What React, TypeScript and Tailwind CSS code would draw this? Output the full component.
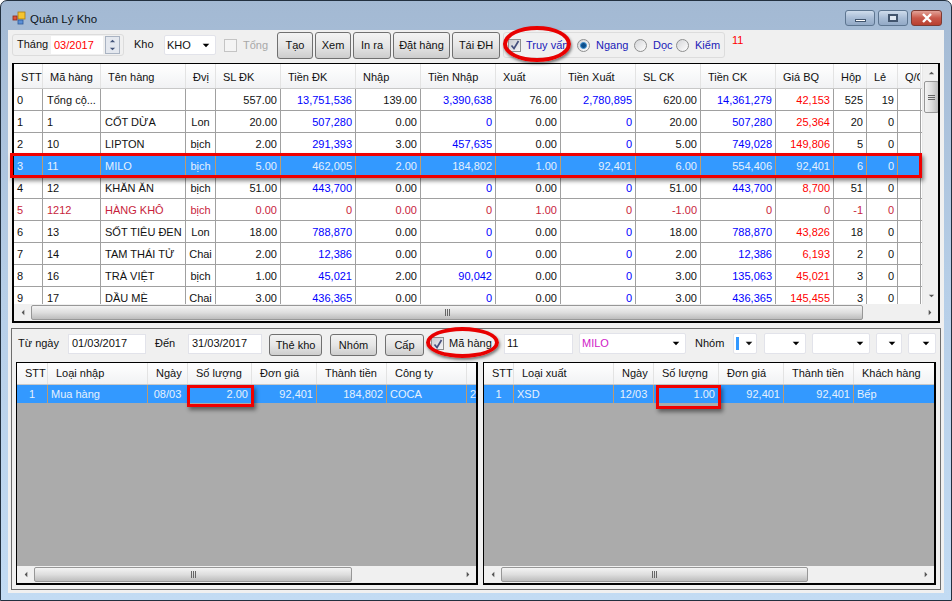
import React from 'react';

const topCols = 'grid grid-cols-[29px_58px_85px_30px_65px_75px_65px_75px_65px_75px_65px_75px_58px_33px_31px_23px]';
const leftCols = 'grid grid-cols-[31px_100px_40px_64px_65px_70px_80px_10px]';
const rightCols = 'grid grid-cols-[30px_100px_40px_65px_65px_70px_81px]';

const topHead = ['STT', 'Mã hàng', 'Tên hàng', 'Đvị', 'SL ĐK', 'Tiền ĐK', 'Nhập', 'Tiền Nhập', 'Xuất', 'Tiền Xuất', 'SL CK', 'Tiền CK', 'Giá BQ', 'Hộp', 'Lẻ', 'Q/C'];

const rows = [
  ['0', 'Tổng cộ...', '', '', '557.00', '13,751,536', '139.00', '3,390,638', '76.00', '2,780,895', '620.00', '14,361,279', '42,153', '525', '19', ''],
  ['1', '1', 'CỐT DỪA', 'Lon', '20.00', '507,280', '0.00', '0', '0.00', '0', '20.00', '507,280', '25,364', '20', '0', ''],
  ['2', '10', 'LIPTON', 'bịch', '2.00', '291,393', '3.00', '457,635', '0.00', '0', '5.00', '749,028', '149,806', '5', '0', ''],
  ['3', '11', 'MILO', 'bịch', '5.00', '462,005', '2.00', '184,802', '1.00', '92,401', '6.00', '554,406', '92,401', '6', '0', ''],
  ['4', '12', 'KHĂN ĂN', 'bịch', '51.00', '443,700', '0.00', '0', '0.00', '0', '51.00', '443,700', '8,700', '51', '0', ''],
  ['5', '1212', 'HÀNG KHÔ', 'bịch', '0.00', '0', '0.00', '0', '1.00', '0', '-1.00', '0', '0', '-1', '0', ''],
  ['6', '13', 'SỐT TIÊU ĐEN', 'Lon', '18.00', '788,870', '0.00', '0', '0.00', '0', '18.00', '788,870', '43,826', '18', '0', ''],
  ['7', '14', 'TAM THÁI TỬ', 'Chai', '2.00', '12,386', '0.00', '0', '0.00', '0', '2.00', '12,386', '6,193', '2', '0', ''],
  ['8', '16', 'TRÀ VIỆT', 'bịch', '1.00', '45,021', '2.00', '90,042', '0.00', '0', '3.00', '135,063', '45,021', '3', '0', ''],
  ['9', '17', 'DẦU MÈ', 'Chai', '3.00', '436,365', '0.00', '0', '0.00', '0', '3.00', '436,365', '145,455', '3', '0', ''],
];

const Arrow = ({ dir, className }: { dir: 'up' | 'down' | 'left' | 'right'; className?: string }) => {
  const pts = { up: '0,5 4,1 8,5', down: '0,1 8,1 4,5', left: '5,0 5,8 1,4', right: '1,0 1,8 5,4' }[dir];
  const box = dir === 'up' || dir === 'down' ? '0 0 8 6' : '0 0 6 8';
  return (
    <svg viewBox={box} className={className}>
      <polygon points={pts} fill="currentColor" />
    </svg>
  );
};

const Grip = ({ vertical }: { vertical?: boolean }) => (
  <div className={vertical ? 'flex flex-col gap-px' : 'flex gap-px'}>
    {[0, 1, 2].map((i) => (
      <div key={i} className={vertical ? 'w-[7px] h-px bg-[#666]' : 'w-px h-[7px] bg-[#666]'} />
    ))}
  </div>
);

// horizontal scrollbar, thumb width comes in as a class
const HScroll = ({ thumb }: { thumb: string }) => (
  <div className="h-[17px] bg-[#f0f0f0] flex items-center shrink-0">
    <div className="w-[17px] flex justify-center text-[#555]">
      <Arrow dir="left" className="w-[4px] h-[7px]" />
    </div>
    <div className="flex-1 h-full py-px">
      <div className={`${thumb} h-full rounded-[2px] border border-[#979797] bg-gradient-to-b from-[#f4f4f4] via-[#dedede] to-[#bdbdbd] flex items-center justify-center`}>
        <Grip />
      </div>
    </div>
    <div className="w-[17px] flex justify-center text-[#555]">
      <Arrow dir="right" className="w-[4px] h-[7px]" />
    </div>
  </div>
);

const Combo = ({ className, text, textClass }: { className: string; text?: string; textClass?: string }) => (
  <div className={`${className} bg-white border border-[#e2e3ea] rounded-[2px] flex items-center pl-[2px] pr-[5px] shrink-0`}>
    <span className={`flex-1 ${textClass ?? ''}`}>{text}</span>
    <Arrow dir="down" className="w-[8px] h-[5px] text-black" />
  </div>
);

const Btn = ({ className, children }: { className: string; children: React.ReactNode }) => (
  <div className={`${className} shrink-0 flex items-center justify-center rounded-[3px] border border-[#707070] bg-gradient-to-b from-[#f3f3f3] via-[#e6e6e6] to-[#cdcdcd]`}>
    {children}
  </div>
);

const Check = ({ checked, disabled }: { checked?: boolean; disabled?: boolean }) => (
  <div className={`w-[13px] h-[13px] shrink-0 border flex items-center justify-center ${disabled ? 'border-[#c4c4c4] bg-[#f4f4f4]' : 'border-[#8e8f8f] bg-gradient-to-br from-[#c9cad0] to-[#f6f6f8]'}`}>
    {checked && (
      <svg viewBox="0 0 10 10" className="w-[10px] h-[10px]">
        <path d="M1.5 5.5 L4 8.5 L8.5 1" fill="none" stroke="#46507e" strokeWidth="1.7" />
      </svg>
    )}
  </div>
);

const Radio = ({ on }: { on?: boolean }) => (
  <div className="w-[13px] h-[13px] shrink-0 rounded-full border border-[#8e8f8f] bg-gradient-to-br from-[#d4d5d8] to-[#fff] flex items-center justify-center">
    {on && <div className="w-[7px] h-[7px] rounded-full bg-[#0d4f8c] border border-[#3b8fd0]" />}
  </div>
);

const TopGrid = () => (
  <div className="h-[260px] border border-black border-l-2 border-b-2 border-r-2 bg-white flex flex-col overflow-hidden shrink-0 relative">
    <div className="flex-1 flex min-h-0">
      <div className="w-[908px] shrink-0 overflow-hidden">
        <div className={`${topCols} h-[25px] border-b border-[#c8c8c8] bg-gradient-to-b from-[#ffffff] to-[#f1f2f4]`}>
          {topHead.map((h) => (
            <div key={h} className="pl-[7px] pt-[2px] border-r border-[#e3e3e3] flex items-center whitespace-nowrap overflow-hidden">{h}</div>
          ))}
        </div>
        {rows.map((r, ri) => {
          const selected = ri === 3;
          const warn = ri === 5;
          return (
            <div key={ri} className={`${topCols} h-[22px] border-b ${selected ? 'bg-[#3399ff] text-[#e6f1fd] border-[#3399ff]' : 'border-[#a0a0a0]'} ${warn ? 'text-[#c81e3c]' : ''}`}>
              {r.map((c, ci) => {
                let align = 'justify-end pr-[3px]';
                if (ci === 0) align = 'justify-start pl-[3px]';
                if (ci === 1 || ci === 2) align = 'justify-start pl-[4px]';
                if (ci === 3) align = 'justify-center';
                let color = '';
                if (!selected && !warn) {
                  if (ci === 5 || ci === 7 || ci === 9 || ci === 11) color = 'text-[#0000ff]';
                  if (ci === 12) color = 'text-[#ff0000]';
                }
                return (
                  <div key={ci} className={`flex items-center pt-[2px] border-r whitespace-nowrap overflow-hidden ${selected ? 'border-[#c09a6c]' : 'border-[#a0a0a0]'} ${align} ${color}`}>{c}</div>
                );
              })}
            </div>
          );
        })}
      </div>
      <div className="w-[17px] ml-auto shrink-0 bg-[#f0f0f0] flex flex-col items-center border-l border-[#e8e8e8]">
        <div className="h-[17px] flex items-center text-[#555]">
          <Arrow dir="up" className="w-[7px] h-[4px]" />
        </div>
        <div className="w-[15px] h-[32px] rounded-[2px] border border-[#979797] bg-gradient-to-r from-[#f4f4f4] via-[#dedede] to-[#bdbdbd] flex items-center justify-center">
          <Grip vertical />
        </div>
        <div className="mt-auto h-[17px] flex items-center text-[#555]">
          <Arrow dir="down" className="w-[7px] h-[4px]" />
        </div>
      </div>
    </div>
    <HScroll thumb="w-[832px]" />
  </div>
);

const SubGrid = ({ cols, head, cells, thumb, className }: { cols: string; head: string[]; cells: string[]; thumb: string; className: string }) => (
  <div className={`${className} h-[223px] border border-black border-b-2 border-r-2 bg-[#ababab] flex flex-col overflow-hidden shrink-0`}>
    <div className="flex-1 min-h-0">
      <div className={`${cols} h-[22px] border-b border-[#c8c8c8] bg-gradient-to-b from-[#ffffff] to-[#f1f2f4]`}>
        {head.map((h, i) => (
          <div key={i} className="pl-2 border-r border-[#e3e3e3] flex items-center whitespace-nowrap overflow-hidden">{h}</div>
        ))}
      </div>
      <div className={`${cols} h-[18px] bg-[#3399ff] text-[#e6f1fd]`}>
        {cells.map((c, i) => {
          let align = 'justify-end pr-[3px]';
          if (i === 0 || i === 2) align = 'justify-center';
          if (i === 1 || i > 5) align = 'justify-start pl-[3px]';
          return (
            <div key={i} className={`flex items-center border-r border-[#c09a6c] whitespace-nowrap overflow-hidden ${align}`}>{c}</div>
          );
        })}
      </div>
    </div>
    <HScroll thumb={thumb} />
  </div>
);

export default function App() {
  return (
    <div className="relative w-[952px] h-[601px] overflow-hidden bg-white font-['Liberation_Sans',Arial,sans-serif] text-[11px] text-[#111]">
      <div className="w-full h-full rounded-t-[7px] border border-[#22303f] bg-gradient-to-b from-[#a3b9d3] via-[#b7cfe8] to-[#c2dbf3] flex flex-col">
        {/* title bar */}
        <div className="h-[29px] shrink-0 flex items-start pl-[11px] pr-[9px]">
          <svg viewBox="0 0 14 14" className="w-[14px] h-[14px] mt-[10px]">
            <rect x="6" y="1" width="7" height="7" fill="#f4c430" stroke="#a87a10" strokeWidth="0.8" />
            <rect x="1" y="5" width="4" height="4" fill="#e0533a" stroke="#8c2a18" strokeWidth="0.8" />
            <rect x="6" y="9" width="5" height="4" fill="#5b8fd6" stroke="#2d5a9a" strokeWidth="0.8" />
          </svg>
          <span className="ml-[4px] mt-[10px] text-[11.5px] leading-[16px] text-[#0b1420]">Quản Lý Kho</span>
          <div className="ml-auto mt-[9px] flex gap-[3px]">
            <div className="w-[30px] h-[16px] rounded-[3px] border border-[#5d7590] bg-gradient-to-b from-[#cfdcec] via-[#a9bdd6] to-[#92a9c6] flex items-end justify-center pb-[3px]">
              <div className="w-[11px] h-[3px] bg-white border border-[#42556e]" />
            </div>
            <div className="w-[30px] h-[16px] rounded-[3px] border border-[#5d7590] bg-gradient-to-b from-[#cfdcec] via-[#a9bdd6] to-[#92a9c6] flex items-center justify-center">
              <div className="w-[10px] h-[8px] border-2 border-[#42556e] bg-[#dfe8f2]" />
            </div>
            <div className="w-[31px] h-[16px] rounded-[3px] border border-[#7d3a32] bg-gradient-to-b from-[#e2a298] via-[#c9584a] to-[#b8402f] flex items-center justify-center">
              <svg viewBox="0 0 12 10" className="w-[12px] h-[10px]">
                <path d="M2 1 L10 9 M10 1 L2 9" stroke="#fff" strokeWidth="2.4" />
              </svg>
            </div>
          </div>
        </div>

        {/* client area */}
        <div className="ml-[7px] w-[936px] h-[563px] bg-[#f0f0f0] px-[4px] flex flex-col shrink-0">
          <div className="h-[33px] pb-[3px] shrink-0 flex items-center gap-[2px]">
            <div className="w-[112px] h-[22px] mr-[8px] border border-[#dcdcdc] rounded-[3px] flex items-center pl-[4px] shrink-0">
              <span className="w-[34px] mb-[2px]">Tháng</span>
              <div className="w-[52px] h-[18px] bg-white text-[#ff0000] flex items-center pl-[3px]">03/2017</div>
              <div className="ml-[2px] w-[15px] h-[18px] flex flex-col border border-[#a9b3c2] bg-[#e4e8ef] text-[#44557a] items-center justify-around">
                <Arrow dir="up" className="w-[7px] h-[4px]" />
                <Arrow dir="down" className="w-[7px] h-[4px]" />
              </div>
            </div>
            <span className="w-[28px] shrink-0 mb-[2px]">Kho</span>
            <Combo className="w-[52px] h-[20px]" text="KHO" />
            <div className="ml-[6px] w-[51px] shrink-0 flex items-center gap-[6px] text-[#a8a8a8]">
              <Check disabled />
              <span>Tổng</span>
            </div>
            <Btn className="w-[36px] h-[27px]">Tạo</Btn>
            <Btn className="w-[36px] h-[27px]">Xem</Btn>
            <Btn className="w-[38px] h-[27px]">In ra</Btn>
            <Btn className="w-[57px] h-[27px]">Đặt hàng</Btn>
            <Btn className="w-[48px] h-[27px]">Tái ĐH</Btn>
            <div className="ml-[1px] w-[222px] h-[26px] border border-[#dcdcdc] rounded-[3px] flex items-center pl-[4px] text-[#1a1ab8] shrink-0">
              <Check checked />
              <span className="ml-[5px] w-[51px] whitespace-nowrap">Truy vấn</span>
              <Radio on />
              <span className="ml-[6px] w-[38px]">Ngang</span>
              <Radio />
              <span className="ml-[6px] w-[23px]">Dọc</span>
              <Radio />
              <span className="ml-[6px]">Kiểm</span>
            </div>
            <span className="ml-[5px] mb-[10px] text-[#ff0000]">11</span>
          </div>

          <TopGrid />

          <div className="mt-[5px] -mx-px h-[262px] border border-[#6e6e6e] shrink-0 flex flex-col">
            <div className="h-[33px] pb-[4px] shrink-0 flex items-center pl-[6px]">
              <span className="w-[50px]">Từ ngày</span>
              <div className="w-[78px] h-[20px] bg-white border border-[#e2e3ea] flex items-center pl-[3px] shrink-0">01/03/2017</div>
              <span className="ml-[9px] w-[33px]">Đến</span>
              <div className="w-[74px] h-[20px] bg-white border border-[#e2e3ea] flex items-center pl-[3px] shrink-0">31/03/2017</div>
              <Btn className="ml-[7px] mt-[3px] w-[53px] h-[22px]">Thẻ kho</Btn>
              <Btn className="ml-[8px] mt-[3px] w-[47px] h-[22px]">Nhóm</Btn>
              <Btn className="ml-[8px] mt-[3px] w-[39px] h-[22px]">Cấp</Btn>
              <div className="ml-[7px] shrink-0"><Check checked /></div>
              <span className="ml-[5px] w-[55px] whitespace-nowrap">Mã hàng</span>
              <div className="w-[69px] h-[20px] bg-white border border-[#e2e3ea] flex items-center pl-[2px] shrink-0">11</div>
              <Combo className="ml-[6px] w-[107px] h-[21px]" text="MILO" textClass="text-[#d020c8]" />
              <span className="ml-[9px] w-[38px]">Nhóm</span>
              <div className="w-[24px] h-[21px] bg-white border border-[#e2e3ea] rounded-[2px] flex items-center pl-[2px] pr-[3px] shrink-0">
                <div className="w-[3px] h-[13px] bg-[#3399ff]" />
                <Arrow dir="down" className="ml-auto w-[8px] h-[5px]" />
              </div>
              <Combo className="ml-[7px] w-[42px] h-[21px]" />
              <Combo className="ml-[6px] w-[58px] h-[21px]" />
              <Combo className="ml-[6px] w-[26px] h-[21px]" />
              <Combo className="ml-[6px] w-[28px] h-[21px]" />
            </div>
            <div className="pl-[4px] flex gap-[5px]">
              <SubGrid
                className="w-[462px]"
                cols={leftCols}
                head={['STT', 'Loại nhập', 'Ngày', 'Số lượng', 'Đơn giá', 'Thành tiền', 'Công ty', '']}
                cells={['1', 'Mua hàng', '08/03', '2.00', '92,401', '184,802', 'COCA', '2']}
                thumb="w-[318px]"
              />
              <SubGrid
                className="w-[453px]"
                cols={rightCols}
                head={['STT', 'Loại xuất', 'Ngày', 'Số lượng', 'Đơn giá', 'Thành tiền', 'Khách hàng']}
                cells={['1', 'XSD', '12/03', '1.00', '92,401', '92,401', 'Bếp']}
                thumb="w-[307px]"
              />
            </div>
          </div>
        </div>
      </div>

      {/* red annotations drawn over the app */}
      <div className="absolute left-[10px] top-[153px] w-[912px] h-[25px] border-[3px] border-[#f00000] shadow-[2px_3px_4px_rgba(0,0,0,0.45)]" />
      <div className="absolute left-[187px] top-[385px] w-[67px] h-[22px] border-[3px] border-[#f00000] shadow-[2px_3px_4px_rgba(0,0,0,0.45)]" />
      <div className="absolute left-[656px] top-[385px] w-[65px] h-[24px] border-[3px] border-[#f00000] shadow-[2px_3px_4px_rgba(0,0,0,0.45)]" />
      <div className="absolute left-[503px] top-[26px] w-[68px] h-[36px] rounded-[50%] border-[4px] border-[#e80000] shadow-[1px_2px_3px_rgba(0,0,0,0.5)]" />
      <div className="absolute left-[426px] top-[327px] w-[73px] h-[31px] rounded-[50%] border-[4px] border-[#e80000] shadow-[1px_2px_3px_rgba(0,0,0,0.5)]" />
    </div>
  );
}
